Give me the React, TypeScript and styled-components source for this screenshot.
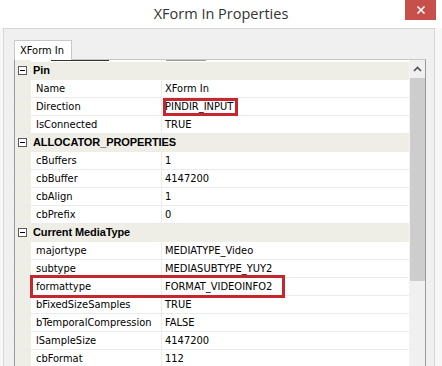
import React from "react";
import styled, { createGlobalStyle } from "styled-components";

const GlobalStyle = createGlobalStyle`
  html, body { margin: 0; padding: 0; background: #ffffff; }
  body { font-family: "Liberation Sans", Arial, sans-serif; }
  * { box-sizing: border-box; }
`;

const Window = styled.div`
  width: 442px;
  height: 366px;
  overflow: hidden;
  background: #f7f7f7;
  display: flex;
  flex-direction: column;
`;

const TitleBar = styled.div`
  height: 28px;
  flex: none;
  background: #ffffff;
  display: grid;
  grid-template-columns: 1fr auto 1fr;
  align-items: start;
`;

const Title = styled.div`
  grid-column: 2;
  font-family: "Open Sans", "Noto Sans", sans-serif;
  font-size: 14.5px;
  color: #333333;
  line-height: 28px;
`;

const CloseButton = styled.div`
  grid-column: 3;
  justify-self: end;
  margin-right: 6px;
  width: 31px;
  height: 20px;
  background: #c7504c;
  display: flex;
  align-items: center;
  justify-content: center;
`;

const Body = styled.div`
  flex: 1;
  display: flex;
  padding: 0 7px 0 3px;
  background: #f7f7f7;
`;

const Panel = styled.div`
  flex: 1;
  border: 1px solid #d6d6d6;
  border-bottom: none;
  background: #f0f0f0;
  padding: 11px 8px 0 10px;
  display: flex;
  flex-direction: column;
`;

const TabStrip = styled.div`
  display: flex;
  height: 19px;
  flex: none;
`;

const Tab = styled.div`
  width: 58px;
  height: 20px;
  border: 1px solid #c8c8c8;
  border-bottom: none;
  background: #ffffff;
  font-family: "DejaVu Sans Condensed", "DejaVu Sans", sans-serif;
  font-stretch: condensed;
  font-size: 11px;
  color: #000;
  padding: 3px 0 0 5px;
  position: relative;
  z-index: 1;
`;

const Grid = styled.div`
  flex: 1;
  border: 1px solid #9a9a9a;
  border-top-color: #c8c8c8;
  border-bottom: none;
  background: #ffffff;
  display: flex;
  overflow: hidden;
`;

const Rows = styled.div`
  flex: 1;
  display: flex;
  flex-direction: column;
  position: relative;
`;

const ClippedRow = styled.div`
  height: 2px;
  flex: none;
  display: grid;
  grid-template-columns: 16px 131px 1fr;
  background: #efeee6;
  overflow: hidden;
`;

const ClippedCell = styled.div<{ $light?: boolean }>`
  background: #ffffff;
  border-right: ${(p) => (p.$light ? "none" : "1px solid #ececec")};
  position: relative;
  &::after {
    content: "";
    position: absolute;
    left: ${(p) => (p.$light ? "4px" : "20px")};
    top: 0;
    width: ${(p) => (p.$light ? "40px" : "58px")};
    height: 1px;
    background: ${(p) => (p.$light ? "#9a9a9a" : "#333")};
  }
`;

const Row = styled.div<{ $category?: boolean }>`
  height: 18px;
  flex: none;
  display: grid;
  grid-template-columns: 16px 131px 1fr;
  position: relative;
  background: ${(p) => (p.$category ? "#efeee6" : "#ffffff")};
  border-bottom: 1px solid ${(p) => (p.$category ? "#efeee6" : "#ebebeb")};
  font-family: "DejaVu Sans Condensed", "DejaVu Sans", sans-serif;
  font-stretch: condensed;
  font-size: 11px;
  line-height: 17px;
  color: #000;
`;

const Gutter = styled.div`
  background: #efeee6;
  display: flex;
  align-items: center;
  justify-content: flex-start;
  padding-left: 3px;
`;

const Expander = styled.div`
  width: 9px;
  height: 9px;
  border: 1px solid #5a5a5a;
  background: #ffffff;
  display: flex;
  align-items: center;
  justify-content: center;
  &::before {
    content: "";
    width: 5px;
    height: 1px;
    background: #000;
  }
`;

const CategoryLabel = styled.div`
  grid-column: 2 / 4;
  font-family: "Liberation Sans", Arial, sans-serif;
  font-stretch: normal;
  font-weight: bold;
  padding-left: 2px;
  letter-spacing: -0.1px;
  white-space: nowrap;
`;

const NameCell = styled.div`
  padding-left: 5px;
  border-right: 1px solid #ebebeb;
  white-space: nowrap;
  overflow: hidden;
`;

const ValueCell = styled.div`
  padding-left: 3px;
  white-space: nowrap;
  overflow: hidden;
`;

const Highlight = styled.div<{ $left: number; $top: number; $width: number; $height: number }>`
  position: absolute;
  left: ${(p) => p.$left}px;
  top: ${(p) => p.$top}px;
  width: ${(p) => p.$width}px;
  height: ${(p) => p.$height}px;
  border: 3px solid #c6262e;
  pointer-events: none;
  z-index: 2;
`;

const ScrollBar = styled.div`
  width: 16px;
  flex: none;
  background: #f0f0f0;
  display: flex;
  flex-direction: column;
  border-left: 1px solid #f4f4f4;
`;

const ScrollArrow = styled.div`
  height: 18px;
  display: flex;
  align-items: center;
  justify-content: center;
  background: #f0f0f0;
`;

const ScrollThumb = styled.div`
  height: 203px;
  background: #cdcdcd;
`;

type Item = { name: string; value: string; mark?: "value" | "row" };
type Category = { title: string; items: Item[] };

const data: Category[] = [
  {
    title: "Pin",
    items: [
      { name: "Name", value: "XForm In" },
      { name: "Direction", value: "PINDIR_INPUT", mark: "value" },
      { name: "IsConnected", value: "TRUE" },
    ],
  },
  {
    title: "ALLOCATOR_PROPERTIES",
    items: [
      { name: "cBuffers", value: "1" },
      { name: "cbBuffer", value: "4147200" },
      { name: "cbAlign", value: "1" },
      { name: "cbPrefix", value: "0" },
    ],
  },
  {
    title: "Current MediaType",
    items: [
      { name: "majortype", value: "MEDIATYPE_Video" },
      { name: "subtype", value: "MEDIASUBTYPE_YUY2" },
      { name: "formattype", value: "FORMAT_VIDEOINFO2", mark: "row" },
      { name: "bFixedSizeSamples", value: "TRUE" },
      { name: "bTemporalCompression", value: "FALSE" },
      { name: "lSampleSize", value: "4147200" },
      { name: "cbFormat", value: "112" },
    ],
  },
];

export default function App() {
  return (
    <>
      <GlobalStyle />
      <Window>
        <TitleBar>
          <Title>XForm In Properties</Title>
          <CloseButton>
            <svg width="10" height="10" viewBox="0 0 10 10">
              <path d="M1.5 1.5 L8.5 8.5 M8.5 1.5 L1.5 8.5" stroke="#ffffff" strokeWidth="1.6" />
            </svg>
          </CloseButton>
        </TitleBar>
        <Body>
          <Panel>
            <TabStrip>
              <Tab>XForm In</Tab>
            </TabStrip>
            <Grid>
              <Rows>
                <ClippedRow>
                  <Gutter />
                  <ClippedCell />
                  <ClippedCell $light />
                </ClippedRow>
                {data.map((cat) => (
                  <React.Fragment key={cat.title}>
                    <Row $category>
                      <Gutter>
                        <Expander />
                      </Gutter>
                      <CategoryLabel>{cat.title}</CategoryLabel>
                    </Row>
                    {cat.items.map((it) => (
                      <Row key={it.name}>
                        <Gutter />
                        <NameCell>{it.name}</NameCell>
                        <ValueCell>{it.value}</ValueCell>
                        {it.mark === "value" && (
                          <Highlight $left={148} $top={0} $width={75} $height={18} />
                        )}
                        {it.mark === "row" && (
                          <Highlight $left={15} $top={-3} $width={255} $height={23} />
                        )}
                      </Row>
                    ))}
                  </React.Fragment>
                ))}
              </Rows>
              <ScrollBar>
                <ScrollArrow>
                  <svg width="9" height="6" viewBox="0 0 9 6">
                    <path d="M1 5 L4.5 1.5 L8 5" stroke="#505050" strokeWidth="1.6" fill="none" />
                  </svg>
                </ScrollArrow>
                <ScrollThumb />
              </ScrollBar>
            </Grid>
          </Panel>
        </Body>
      </Window>
    </>
  );
}
